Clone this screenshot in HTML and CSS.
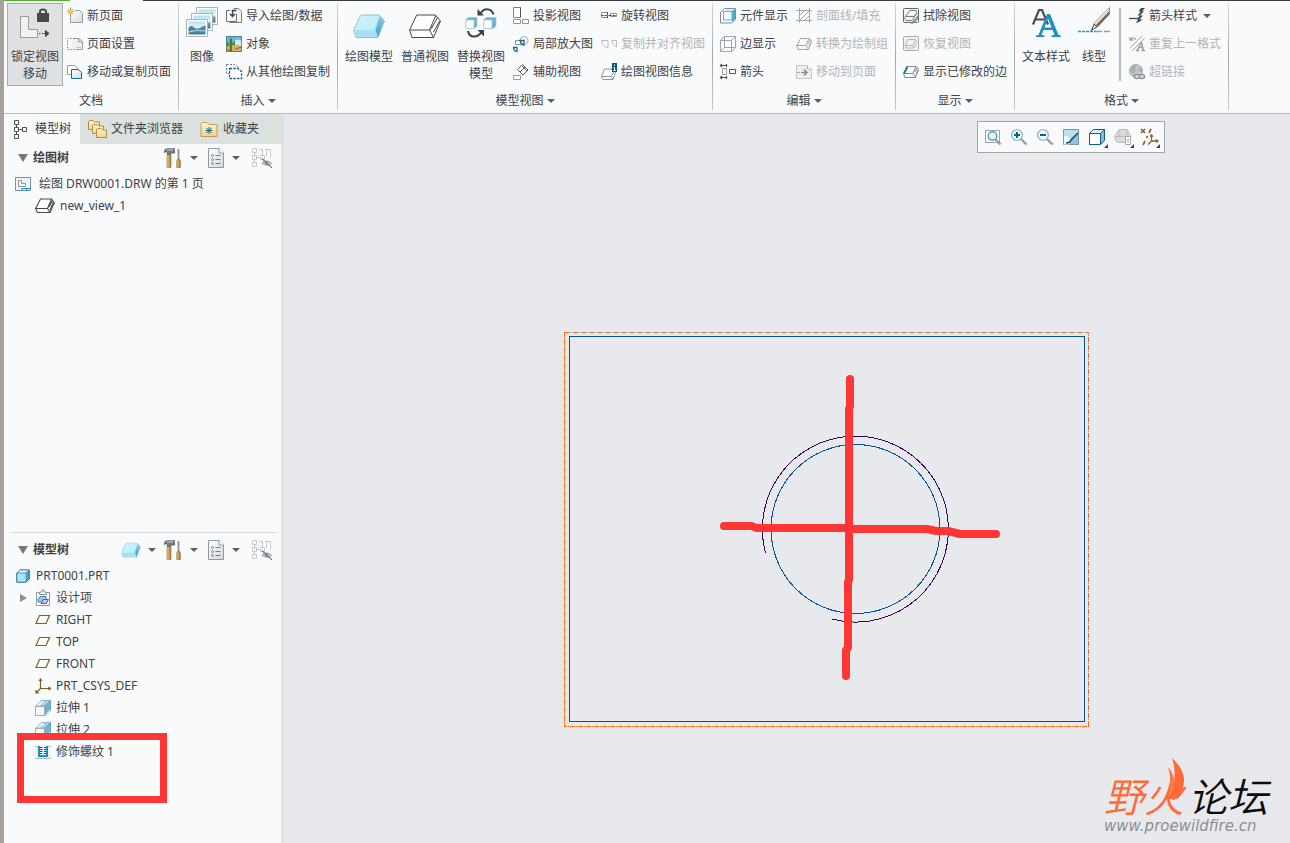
FILE: index.html
```html
<!DOCTYPE html>
<html lang="zh-CN">
<head>
<meta charset="utf-8">
<title>DRW0001.DRW</title>
<link rel="stylesheet" href="styles.css">
</head>
<body class="app">
<svg class="sprite" aria-hidden="true">
  <defs>
    <linearGradient id="ice" x1="0" y1="0" x2="1" y2="1"><stop offset="0" stop-color="#e8fbff"/><stop offset=".55" stop-color="#b4e8f8"/><stop offset="1" stop-color="#8fd6f0"/></linearGradient>
    <linearGradient id="iceside" x1="0" y1="0" x2="0" y2="1"><stop offset="0" stop-color="#8ccbe4"/><stop offset="1" stop-color="#3d9fc8"/></linearGradient>
    <linearGradient id="page" x1="0" y1="0" x2="1" y2="1"><stop offset="0" stop-color="#fff"/><stop offset="1" stop-color="#d4dade"/></linearGradient>
    <linearGradient id="wood" x1="0" y1="0" x2="1" y2="0"><stop offset="0" stop-color="#f0cf92"/><stop offset="1" stop-color="#a8722c"/></linearGradient>
    <linearGradient id="folder" x1="0" y1="0" x2="0" y2="1"><stop offset="0" stop-color="#fff3d0"/><stop offset="1" stop-color="#f4d287"/></linearGradient>
    <linearGradient id="photo" x1="0" y1="0" x2="0" y2="1"><stop offset="0" stop-color="#aee0f5"/><stop offset=".45" stop-color="#e6f4f8"/><stop offset=".6" stop-color="#6f9db2"/><stop offset="1" stop-color="#35789c"/></linearGradient>
  </defs>
  <symbol id="i-hammer" viewBox="0 0 18 20">
    <path d="M3 6.500h4V19.500h-4z" fill="url(#wood)" stroke="#a0743a" stroke-width=".6"/>
    <path d="M.5 4.500V2.500Q1 .8 3 .7H10.500V5H7.500L6.500 6.500H3.500V4Q2 3.200.5 4.500z" fill="#777b80" stroke="#4f5458" stroke-width=".7"/>
    <path d="M2.500 2H9" stroke="#cfd3d6"/><path d="M14.500 1V11" stroke="#85898d" stroke-width="1.600"/>
    <path d="M12.800 12.500l1-1.500h1.500l1 1.500v7h-3.500z" fill="url(#wood)" stroke="#98682c" stroke-width=".7"/>
  </symbol>
  <symbol id="i-list" viewBox="0 0 16 20">
    <path d="M.5.500H11L15.500 5V19.500H.5z" fill="url(#page)" stroke="#8e979d"/><path d="M11 .5V5H15.500" fill="#fff" stroke="#8e979d"/>
    <g fill="none" stroke="#6d757a" stroke-width=".9"><rect x="3.500" y="6.500" width="2" height="2" rx="1"/><rect x="3.500" y="10.500" width="2" height="2" rx="1"/><rect x="3.500" y="14.500" width="2" height="2" rx="1"/><path d="M7.500 7.500h5M7.500 11.500h5M7.500 15.500h5"/></g>
  </symbol>
  <symbol id="i-treehide" viewBox="0 0 20 20">
    <g fill="none" stroke="#c4c8ca"><path d="M.5.500h4v4h-4zM.5 7.500h4v4h-4zM.5 14.500h4v4h-4zM2.500 4.500v3M2.500 11.500v3M4.500 9.500h4M8.500 7.500h4v4h-4zM7 1.500h4M13 1.500h5.500M10.500 1.500v6M14.500 1.500v7M18.500 1.500v8"/></g>
    <path d="M10 15Q14.500 10.800 19.500 15.500Q15 19 10 15z" fill="#dfe2e3" stroke="#8c9193"/><circle cx="14.500" cy="15" r="2" fill="#8c9193"/><path d="M10 10.500L20 20" stroke="#777d80" stroke-width="1.200"/>
  </symbol>
  <symbol id="i-view" viewBox="0 0 20 16"><g fill="#fff" stroke="#43484b" stroke-width="1.100"><path d="M5.500 1H16.500L19.300 4.500L15 14.500H2.500L.6 10.500z"/><path fill="none" d="M.6 10.500H12.500L16.500 1M12.500 10.500L15 14.500M14 9L17.500 2.500M15 12L18.500 4"/></g></symbol>
  <symbol id="i-plane" viewBox="0 0 16 12"><path d="M4.500 1.500H14.500L11 9.500H1z" fill="#fffdf4" stroke="#7f6126" stroke-width="1.200"/></symbol>
  <symbol id="i-extrude" viewBox="0 0 16 16">
    <path d="M.8 6L6.500.5H15.500L10 6z" fill="#a9d3e5" stroke="#82b5cb"/><path d="M1.500 5.500L6.500 1H10L5 5.500z" fill="#e4f1f6"/><path d="M10 6L15.500.5V10L10 15.500z" fill="#71b2d1" stroke="#64a3c1"/><path d="M10.800 14L15 9.800V11L11 15z" fill="#fff" stroke="#9cc7da" stroke-width=".6"/><rect x=".5" y="6.500" width="9" height="9" fill="#f8f8f8" stroke="#a6abad"/>
  </symbol>
  <symbol id="i-slab" viewBox="0 0 32 32">
    <path d="M8 7H26L31.500 13L25 29.500H3L.5 22z" fill="url(#ice)" stroke="#9bbfcb"/><path d="M26.500 8L31 13L25 29L22.500 22z" fill="url(#iceside)"/><path d="M1 22L22 22.500L24.500 29H3z" fill="#a6e0f3"/><path d="M8.500 8H26L21 22H1.500z" fill="#c7f0fb" opacity=".8"/>
  </symbol>
  <symbol id="i-slabline" viewBox="0 0 16 16"><path d="M4.500 2.500H13L15.500 5L12.500 13.500H2L.6 10z" fill="none" stroke="currentColor"/><path d="M.6 9.500H10L13 2.500M10 9.500L12.500 13.500M11.700 8L14.500 3.500M13 10.500L15 6" fill="none" stroke="currentColor"/></symbol>
</svg>

<header class="topstrip"><span class="topstrip-file"></span><span class="topstrip-tab"></span></header>

<nav class="ribbon" aria-label="功能区">
  <section class="group">
    <div class="group-body">
      <button class="big big-active"><svg class="icon32" viewBox="0 0 32 32"><path d="M1.500 8.500h8v13h9v8h-17z" fill="#f1f2f3" stroke="#9a9c9d"/><path d="M21 6V3.500Q21 1.500 24 1.500T27 3.500V6" fill="none" stroke="#4a4a4a" stroke-width="2"/><rect x="18" y="5" width="12" height="9" fill="#484848"/><path d="M20 25.500h1.500M23 25.500h1.500M25 25.500h4M26.500 22.500L30 25.500L26.500 28.500z" stroke="#444" fill="#444"/></svg><span>锁定视图</span><span>移动</span></button>
      <div class="column">
        <button class="small"><svg class="icon16" viewBox="0 0 16 16"><path d="M3.500 4V14.500H15.500V5.500L12.500 2.500H8" fill="url(#page)" stroke="#979da1"/><path d="M3.500-.5V7M0 3.300H7M1 .8L6 5.800M6 .8L1 5.800" stroke="#e78a12"/><circle cx="3.500" cy="3.300" r="1.200" fill="#ffe05a"/></svg>新页面</button>
        <button class="small"><svg class="icon16" viewBox="0 0 16 16"><path d="M8 2.500H12L15.500 5.500V13.500H5V2.500z" fill="#edf0f2"/><path d="M7 2.500H12L15.500 5.500V13.500H9" fill="none" stroke="#979da1"/><path d="M7.500 2.500H.5V13.500H8" fill="none" stroke="#7b858b" stroke-dasharray="1.500 1.500"/><path d="M11.500 2.500V6H15.500" fill="#d3dadd" stroke="#979da1"/><path d="M9 11.500h5" stroke="#bcc7cc"/></svg>页面设置</button>
        <button class="small"><svg class="icon16" viewBox="0 0 16 16"><path d="M.5 1.500H8L10.500 4V10.500H.5z" fill="#fff" stroke="#979da1"/><path d="M4.500 5.500H11.500L14.500 8.500V14.500H4.500z" fill="url(#page)" stroke="#17698c"/></svg>移动或复制页面</button>
      </div>
    </div>
    <div class="group-label">文档</div>
  </section>

  <section class="group">
    <div class="group-body">
      <button class="big big-narrow"><svg class="icon32" viewBox="0 0 32 32"><g fill="#fff" stroke="#adb2b5"><path d="M10.500-.5h21v17h-21z"/><path d="M12.500 1.500h17v13h-17z" fill="url(#photo)" stroke="none"/><path d="M5.500 5.500h21v17h-21z"/><path d="M7.500 7.500h17v13h-17z" fill="url(#photo)" stroke="none"/><path d="M.5 11.500h21v17h-21z"/><path d="M2.500 13.500h17v13h-17z" fill="url(#photo)" stroke="none"/></g><path d="M2.500 20Q5 16.500 8 19.500T14 20T19.500 17.500V22H2.500z" fill="#52859b"/><path d="M3 24Q11 21 19 23" stroke="#a7d7e9" fill="none"/></svg><span>图像</span></button>
      <div class="column">
        <button class="small"><svg class="icon16" viewBox="0 0 16 16"><path d="M7.500.5H12.500L15.500 3.500V14.500H3.500" fill="#f0f2f3" stroke="#777f83"/><path d="M4 2.500H.5V13.500H10.500V6" fill="none" stroke="#6b7174"/><path d="M10.500 2.500H6.500V8M4 6L6.500 8.500L9 6" fill="none" stroke="#3d4346" stroke-width="1.400"/></svg>导入绘图/数据</button>
        <button class="small"><svg class="icon16" viewBox="0 0 16 16"><path d="M0 0H16V16H0z" fill="#68b4dc"/><path d="M8 5Q12 2 16 5V10H8z" fill="#d6edf6"/><path d="M0 10Q8 7 16 10V16H0z" fill="#d5ae69"/><path d="M3.800 3Q5 1.500 6 3V16H3.800zM1 6V10H4V8.500H2.200V6zM9 5V9H6V7.500H7.800V5z" fill="#4e7f20"/><path d="M9 13L16 11M0 14h4" stroke="#876735"/><path d="M.5.500h15v15H.500z" fill="none" stroke="#466f76" stroke-width=".7"/></svg>对象</button>
        <button class="small"><svg class="icon16" viewBox="0 0 16 16"><path d="M.5.500H8L12.500 3V7M.5.500V9.500H5" fill="none" stroke="#697b84" stroke-dasharray="2 1.500"/><path d="M3.500 4.500H12L15.500 7.500V14.500H3.500z" fill="#fff" stroke="#166687" stroke-width="1.300" stroke-dasharray="2.500 1.200"/></svg>从其他绘图复制</button>
      </div>
    </div>
    <button class="group-label">插入<i class="caret"></i></button>
  </section>

  <section class="group">
    <div class="group-body">
      <button class="big"><svg class="icon32"><use href="#i-slab"/></svg><span>绘图模型</span></button>
      <button class="big"><svg class="icon32" viewBox="0 0 32 32"><g fill="#fff" stroke="#45494b"><path d="M7.700 7H26L31.500 13L24.500 29.500H3L.6 22z"/><path fill="none" d="M.6 22H20.500L27 7M20.500 22L24.500 29.500M22.500 20L29 9M24.500 24L30.500 13M20.500 22L24 18.500"/></g></svg><span>普通视图</span></button>
      <button class="big"><svg class="icon32" viewBox="0 0 32 32"><g stroke="#b5bec2" stroke-width=".7"><path d="M1 11.500L3.500 9.500H12V18L9.500 20.500H1z" fill="#62b5da"/><path d="M1 12H9V20.500H1z" fill="#fff"/><path d="M19 11.500L21.500 9.500H31V18L28 20.500H19z" fill="#62b5da"/><path d="M19 12H27V20.500H19z" fill="#fff"/></g><g fill="none" stroke="#3e4346" stroke-width="2"><path d="M28.500 6.500Q27 1.200 22 1.200Q18 1.200 16 5"/><path d="M3 23Q4 29 10 28.500Q14 28 16.500 24"/></g><path d="M12.500 1V7.500H19z M19 28.500V22H12.500z" fill="#3e4346"/></svg><span>替换视图</span><span>模型</span></button>
      <div class="column">
        <button class="small"><svg class="icon16" viewBox="0 0 16 16"><g fill="#fff" stroke="#8f9699"><path d="M.5-.5h7v10h-7z" stroke="#7d8386"/><path d="M.5 11.500h7v4h-7zM9.500 11.500h6v4h-6z"/></g><path d="M7.500-.5V9.500" stroke="#4d5254"/></svg>投影视图</button>
        <button class="small"><svg class="icon16" viewBox="0 0 16 16"><circle cx="11" cy="4.500" r="4" fill="#f9fafb" stroke="#a4b0b5"/><path d="M2.500 4.500h6v4h-6z" fill="#fff" stroke="#879398"/><path d="M7 4.500H11V9Q8 9 7 4.500z" fill="#d1edf5" stroke="#17698c" stroke-width="1.300"/><path d="M.5 11.500H4V15.500Q1 15.500.5 11.500z" fill="#fff" stroke="#17698c" stroke-width="1.300"/></svg>局部放大图</button>
        <button class="small"><svg class="icon16" viewBox="0 0 16 16"><path d="M4.500 5.500L9.500.5L15 6L10 11z" fill="#fff" stroke="#555b5e"/><path d="M7 8L12 3M9 2L14 7" stroke="#555b5e"/><path d="M.5 11.500h7v4h-7z" fill="#fff" stroke="#989ea1"/></svg>辅助视图</button>
      </div>
      <div class="column">
        <button class="small"><svg class="icon16" viewBox="0 0 16 16"><path d="M.5 4.500h6v5h-6zM9.500 5.500h6v3h-6z" fill="#fff" stroke="#8c8e8c"/><path d="M6.500 4V10" stroke="#4b4d4b"/><path d="M0 7.500H16" stroke="#4b4d4b"/><path d="M2 7.500H16" stroke="#d99436" stroke-dasharray="2 2"/></svg>旋转视图</button>
        <button class="small" disabled><svg class="icon16" viewBox="0 0 16 16"><path d="M.5 4.500H7V11.500Q2 11.500.5 4.500zM10.500 4.500H15.500V10.500Q11 9.500 10.500 4.500z" fill="#fff" stroke="#b4b8ba"/></svg>复制并对齐视图</button>
        <button class="small"><svg class="icon16" viewBox="0 0 16 16"><path d="M3.500 5H10L14.500 8L12 15.500H2L.5 12.500z" fill="#fff" stroke="#90969a"/><path d="M.5 12.500H10L13 8M10 12.500L12 15.500" fill="none" stroke="#90969a"/><path d="M11-1H16V8H11z" fill="#07587f"/><path d="M13.500.5V2M12.500 3.500H13.500V6M12.300 6.500H15" stroke="#fff" fill="none"/></svg>绘图视图信息</button>
      </div>
    </div>
    <button class="group-label">模型视图<i class="caret"></i></button>
  </section>

  <section class="group">
    <div class="group-body">
      <div class="column">
        <button class="small"><svg class="icon16" viewBox="0 0 16 16"><path d="M.5 4.500L4.500.5H15.500V11.500L11.500 15H.5z" fill="#fff" stroke="#81898d"/><path d="M3.500 3.500L5 1H15L12 3.500z" fill="#d3eef8"/><path d="M12 3L15 1V11L12 14z" fill="#56a9cf"/><path d="M3.500 3.500H12V12H3.500z" fill="#effafd" stroke="#5fb3d5"/></svg>元件显示</button>
        <button class="small"><svg class="icon16" viewBox="0 0 16 16"><path d="M.5 4.500L4.500.5H15.500V11.500L11.500 15.500H.5zM4.500.5V11.500M.5 15L4.500 11.500H15.500M.5 4.500H11.500V15.500M11.500 4.500L15.500.5" fill="#fff" fill-opacity=".5" stroke="#969da0" stroke-width=".9"/></svg>边显示</button>
        <button class="small"><svg class="icon16" viewBox="0 0 16 16"><path d="M.5 1.500H6M.5 13.500H6M2 0L.5 1.500L2 3M2 12L.5 13.500L2 15M6.500 0V3M6.500 12V15" fill="none" stroke="#4b5053" stroke-width="1.200"/><path d="M2.500 4.500h4v6h-4z" fill="#fff" stroke="#989da0"/><path d="M9.500 5.500h6v4h-6z" fill="#fff" stroke="#53585a"/></svg>箭头</button>
      </div>
      <div class="column">
        <button class="small" disabled><svg class="icon16" viewBox="0 0 16 16"><path d="M3.500 0V15M13.500 0V15M0 2.500H16M0 12.500H16" stroke="#a5a9ab"/><path d="M4 7L8 3M4 12L13 3M9 12L13 8" stroke="#a5a9ab"/></svg>剖面线/填充</button>
        <button class="small" disabled><svg class="icon16 gray"><use href="#i-slabline"/></svg>转换为绘制组</button>
        <button class="small" disabled><svg class="icon16" viewBox="0 0 16 16"><path d="M.5 1.500H11.500L15.500 5V14.500H.5z" fill="#eceeef" stroke="#c4c8ca"/><path d="M11.500 1.500V5H15.500" stroke="#b3b7b9" fill="#fff"/><path d="M1 8.500H6" stroke="#898e90" stroke-dasharray="1 1"/><path d="M6 8.500H11M8 5.500L11 8.500L8 11.500" fill="none" stroke="#898e90" stroke-width="1.600"/></svg>移动到页面</button>
      </div>
    </div>
    <button class="group-label">编辑<i class="caret"></i></button>
  </section>

  <section class="group">
    <div class="group-body">
      <div class="column">
        <button class="small"><svg class="icon16" viewBox="0 0 16 16"><rect x=".5" y=".5" width="15" height="14" rx="1" fill="#f3f4f4" stroke="#616669"/><path d="M4.500 5.500L7 2.500H13L14 4.500L11 8.500H2.500L1.500 10.500L3 12.500H9L14 5M3 8L5 5.500" fill="none" stroke="#777d80"/><path d="M6 14.500Q11 14 14.500 7.500L16 8.500Q13 14.500 9 16z" fill="#84898c"/></svg>拭除视图</button>
        <button class="small" disabled><svg class="icon16" viewBox="0 0 16 16"><rect x=".5" y=".5" width="15" height="14" rx="1" fill="#f1f2f3" stroke="#a6abad"/><path d="M5 3.500H12.500L14 5.500L11 12H3L2 9.500zM2 9.500H9.500L12.500 3.500M9.500 9.500L11 12" fill="none" stroke="#b3b7b9"/></svg>恢复视图</button>
        <button class="small"><svg class="icon16 mid" viewBox="0 0 16 16"><use href="#i-slabline"/><path d="M1 9.500L4.500 2.500" stroke="#0f739e" stroke-width="1.800"/></svg>显示已修改的边</button>
      </div>
    </div>
    <button class="group-label">显示<i class="caret"></i></button>
  </section>

  <section class="group">
    <div class="group-body">
      <button class="big"><svg class="icon32" viewBox="0 0 32 32"><path d="M3 16.500L9 2H12L18 16.500M5 11.500H15" fill="none" stroke="#4b4d4f" stroke-width="2.200"/><path d="M6 29V27.500L8.500 27L17 6H20L28.500 27L31 27.500V29H21.500V27.500L24.500 27L22.500 22H13.500L11.500 27L14.500 27.500V29zM14.500 19.500H21.500L18 10.500z" fill="#1d91c4"/></svg><span>文本样式</span></button>
      <button class="big big-narrow"><svg class="icon32" viewBox="0 0 32 32"><path d="M0 23.500H18" stroke="#1b9ad0" stroke-width="1.600" stroke-dasharray="3 1"/><path d="M18 23.500H32" stroke="#999da0" stroke-width="1.400" stroke-dasharray="6 2"/><path d="M14 21.500L16.500 15L31.500-.5V6L20 18.500z" fill="#d8dadb" stroke="#777b7e" stroke-width=".8"/><path d="M20 18.500L31.500 6V3L18 17z" fill="#8a5e45"/><path d="M17 16L31 1" stroke="#fff"/><path d="M13.500 22.500L16 16.500L19 18.500z" fill="#fff" stroke="#434649"/></svg><span>线型</span></button>
      <span class="divider"></span>
      <div class="column">
        <button class="small"><svg class="icon16" viewBox="0 0 16 16"><path d="M0 10.500H9" stroke="#44484b" stroke-width="1.300"/><path d="M12 0H16L13 3H15L11 7.500H14L10.500 11.500H14L7 15.500L9 11.500L8 11L11 7.500H8.500L12 3.500H9.500z" fill="#3f4346"/></svg>箭头样式<i class="caret"></i></button>
        <button class="small" disabled><svg class="icon16" viewBox="0 0 16 16"><path d="M1 12L13 0M3 15L15.500 2.500" stroke="#a0a5a7"/><path d="M1 1V4H4M1 4Q4 0 7 3.500" fill="none" stroke="#9ca1a3" stroke-width="1.300"/><path d="M8 14.500L12.500 6.500L14.500 14.500M10 11.500H14M7 14.500H10M12.500 14.500H16" fill="none" stroke="#979c9e" stroke-width="1.300"/></svg>重复上一格式</button>
        <button class="small" disabled><svg class="icon16" viewBox="0 0 16 16"><circle cx="7" cy="7" r="6.600" fill="#c5c9cb" stroke="#aeb3b5"/><path d="M2 3Q5 0 8 1L6 4L8 6L4 10L1 7zM10 3L13 5V8L9 7z" fill="#aab0b2"/><g fill="#e4e6e7" stroke="#8d9294" stroke-width="1.400"><rect x="5.500" y="10.500" width="5" height="4" rx="2"/><rect x="10.500" y="10.500" width="5" height="4" rx="2"/></g></svg>超链接</button>
      </div>
    </div>
    <button class="group-label">格式<i class="caret"></i></button>
  </section>
</nav>

<div class="workspace">
  <aside class="navigator">
    <div class="tabs" role="tablist">
      <button class="tab tab-active" role="tab" aria-selected="true"><svg class="tab-icon" viewBox="0 0 18 18"><g fill="#fff" stroke="#4c5153"><path d="M3.500 2.500v12M3.500 9.500h6" fill="none"/><path d="M1.500.5h4v4h-4zM1.500 7.500h4v4h-4zM1.500 14.500h4v4h-4zM9.500 7.500h4v4h-4z"/></g></svg>模型树</button>
      <button class="tab" role="tab"><svg class="tab-icon" viewBox="0 0 18 18"><g fill="url(#folder)" stroke="#b68b45"><path d="M.5 9.500V1.500L2 .5H5L6.500 2H11.500V9.500z"/><path d="M4.500 13.500V5.500L6 4.500H9L10.500 6H15.500V13.500z"/><path d="M8.500 17.500V9.500L10 8.500H13L14.500 10H18.500V17.500z"/></g></svg>文件夹浏览器</button>
      <button class="tab" role="tab"><svg class="tab-icon" viewBox="0 0 18 18"><path d="M1 16.500V3.500L2.500 2.500H7L9 4.500H17V16.500z" fill="url(#folder)" stroke="#c29b5b"/><path d="M9 7V14M5.500 10.500H12.500M6.500 8L11.500 13M11.500 8L6.500 13" stroke="#087099"/></svg>收藏夹</button>
    </div>

    <section class="pane pane-drawing">
      <header class="pane-head">
        <i class="twist"></i><h2>绘图树</h2>
        <div class="pane-tools">
          <button class="tool" aria-label="设置"><svg class="hammer"><use href="#i-hammer"/></svg><i class="caret"></i></button>
          <button class="tool" aria-label="显示"><svg class="list"><use href="#i-list"/></svg><i class="caret"></i></button>
          <button class="tool" aria-label="隐藏" disabled><svg class="treehide"><use href="#i-treehide"/></svg></button>
        </div>
      </header>
      <ul class="tree">
        <li class="node"><svg class="icon16" viewBox="0 0 16 16"><path d="M.5 1.500H15.500V14.500H.5z" fill="#edf7fa" stroke="#79939f"/><path d="M3.500 4.500H6.500V7.500H10.500V10.500H3.500z" fill="#fff" stroke="#8d989d"/><path d="M7 15V12.500H16M11.500 12.500V15" stroke="#2492c2" fill="none"/></svg><span>绘图 DRW0001.DRW 的第 1 页</span></li>
        <li class="node level-1"><svg class="viewicon"><use href="#i-view"/></svg><span>new_view_1</span></li>
      </ul>
    </section>

    <section class="pane pane-model">
      <header class="pane-head">
        <i class="twist"></i><h2>模型树</h2>
        <div class="pane-tools">
          <button class="tool tool-model" aria-label="模型"><svg class="slab" viewBox="0 5 32 26"><use href="#i-slab" width="32" height="32"/></svg><i class="caret"></i></button>
          <button class="tool" aria-label="设置"><svg class="hammer"><use href="#i-hammer"/></svg><i class="caret"></i></button>
          <button class="tool" aria-label="显示"><svg class="list"><use href="#i-list"/></svg><i class="caret"></i></button>
          <button class="tool" aria-label="隐藏" disabled><svg class="treehide"><use href="#i-treehide"/></svg></button>
        </div>
      </header>
      <ul class="tree">
        <li class="node part"><svg class="icon14" viewBox="0 0 14 14"><path d="M.8 4L4 1H13.200V10L10 13.200H.8z" fill="#46a9d3" stroke="#16668b"/><path d="M.8 4L4 1H13L10 4z" fill="#d7f4fc" stroke="#2d7798" stroke-width=".6"/><path d="M1.300 4.500H9.500V12.700H1.300z" fill="#aee6f8"/></svg><span>PRT0001.PRT</span></li>
        <li class="node level-1"><i class="twist twist-closed"></i><svg class="icon16" viewBox="0 0 16 16"><path d="M1.500 2.500H14.500V15.500H1.500z" fill="#fff" stroke="#929a9e"/><path d="M4.500 4.500V2.500L7 1.500V0H9V1.500L11.500 2.500V4.500z" fill="#f2f4f5" stroke="#8a9296"/><path d="M3 9L5 6.500H11V9L9 12H3z" fill="#8fd0e6" stroke="#3e8fac"/><path d="M6 13.500L8 9.500H13.500L11.500 13.500z" fill="#cdbce8" stroke="#7855ab"/></svg><span>设计项</span></li>
        <li class="node level-1"><svg class="planeicon"><use href="#i-plane"/></svg><span>RIGHT</span></li>
        <li class="node level-1"><svg class="planeicon"><use href="#i-plane"/></svg><span>TOP</span></li>
        <li class="node level-1"><svg class="planeicon"><use href="#i-plane"/></svg><span>FRONT</span></li>
        <li class="node level-1"><svg class="icon16" viewBox="0 0 16 16"><path d="M5.500 1V10.500H15M5.500 10.500L1 15M4 3L5.500 1L7 3M13.500 9L15.500 10.500L13.500 12M1 12V15H4" fill="none" stroke="#7f5d22" stroke-width="1.200"/></svg><span>PRT_CSYS_DEF</span></li>
        <li class="node level-1"><svg class="icon16"><use href="#i-extrude"/></svg><span>拉伸 1</span></li>
        <li class="node level-1"><svg class="icon16"><use href="#i-extrude"/></svg><span>拉伸 2</span></li>
        <li class="node level-1"><svg class="icon16" viewBox="0 0 16 16"><path d="M0 2H16V15H0z" fill="#f0f1f2"/><path d="M0 2.500H4M12 2.500H16M0 14.500H16" stroke="#b3b6b8"/><path d="M3 2H13V13H3z" fill="#1690c2"/><path d="M5 2H11V11H5z" fill="#f4fbfd"/><path d="M5 3.500H7.500M5 5.500H7.500M5 7.500H7.500M5 9.500H7.500M9 3.500H11M9 5.500H11M9 7.500H11M9 9.500H11" stroke="#075478"/></svg><span>修饰螺纹 1</span></li>
      </ul>
      <div class="highlight"></div>
    </section>
  </aside>

  <main class="canvas">
    <div class="viewbar" role="toolbar">
      <button aria-label="重新调整"><svg class="icon18" viewBox="0 0 18 18"><path d="M1.500 2.500h14v12h-14z" fill="#fff" stroke="#9ca1a4"/><circle cx="8.500" cy="8" r="4.300" fill="#e6f5fb" stroke="#5b9dba" stroke-width="1.400"/><path d="M11.500 11.500L16.500 16.500" stroke="#a39a93" stroke-width="2.400"/></svg></button>
      <button aria-label="放大"><svg class="icon18" viewBox="0 0 18 18"><circle cx="7" cy="7" r="5.400" fill="#f2fafd" stroke="#93bccd" stroke-width="1.400"/><path d="M7 4V10M4 7H10" stroke="#086391" stroke-width="2"/><path d="M11 11L16.500 16.500" stroke="#a39a93" stroke-width="2.400"/></svg></button>
      <button aria-label="缩小"><svg class="icon18" viewBox="0 0 18 18"><circle cx="7" cy="7" r="5.400" fill="#f2fafd" stroke="#93bccd" stroke-width="1.400"/><path d="M4 7H10" stroke="#086391" stroke-width="2"/><path d="M11 11L16.500 16.500" stroke="#a39a93" stroke-width="2.400"/></svg></button>
      <button aria-label="重画"><svg class="icon18" viewBox="0 0 18 18"><path d="M1.500 1.500h15v15h-15z" fill="#8cc6dc" stroke="#83969d"/><path d="M2 2H16V5Q14 12 2 12z" fill="#b9e0ec"/><path d="M2 8Q8 8 9 12L7 16.500H2z" fill="#f8f9fa"/><path d="M4 15Q8 15 9 12L16 5" fill="none" stroke="#174f68" stroke-width="1.600"/></svg></button>
      <button aria-label="显示样式"><svg class="icon18" viewBox="0 0 18 18"><path d="M1.500 5.500L5.500 1.500H16.500V12.500L12.500 16.500H1.500z" fill="#85bed4" stroke="#135f82"/><path d="M1.500 5.500L5.500 1.500H16.500L12.500 5.500z" fill="#d9f2fa" stroke="#135f82"/><path d="M1.500 5.500H12.500V16.500H1.500z" fill="#fff" stroke="#135f82"/></svg><i class="corner"></i></button>
      <button aria-label="视图管理器"><svg class="icon18" viewBox="0 0 18 18"><path d="M1 8L5 1.500H13L16.500 7.500V11L12 14.500H4L1 12z" fill="#d9dbdd" stroke="#b9bdbf"/><path d="M1 8.500H15M5 2V8M13 2V8" stroke="#b9bdbf"/><path d="M11.500 8.500H16.500V16.500H11.500z" fill="#fff" stroke="#a3a7a9"/><path d="M13 11.500h2M13 13.500h2" stroke="#a3a7a9"/></svg><i class="corner"></i></button>
      <button aria-label="基准显示"><svg class="icon18" viewBox="0 0 18 18"><path d="M1 1L5 5M5 1L1 5M11 1L9 5M7.500 8L6.500 10M5 13L3 17" stroke="#86662e" stroke-width="1.700"/><path d="M11.500 7V13H18M11.500 13L8 16.500M10 8.500L11.500 7L13 8.500M16 11.500L18 13L16 14.500" fill="none" stroke="#86662e" stroke-width="1.300"/></svg><i class="corner"></i></button>
    </div>

    <svg class="drawing" viewBox="560 328 534 404" fill="none">
      <g shape-rendering="crispEdges">
        <rect x="564.500" y="332.500" width="524" height="394" stroke="#ff6a13" stroke-dasharray="5 1 1 1"/>
        <rect x="569.500" y="336.500" width="515" height="385" stroke="#0753a0"/>
        <path d="M831.500 619A93 93 0 1 0 765.500 553" stroke="#3c0060"/>
        <circle cx="855.500" cy="529" r="84.500" stroke="#0753a0"/>
      </g>
      <g stroke="#ff3636" stroke-width="8" stroke-linecap="round" stroke-linejoin="round">
        <path d="M850 379V406L849 409V580L848 582V648L846 650V676"/>
        <path d="M724 526H752L756 528H845L850 529H927L936 531H948L960 534H996"/>
      </g>
    </svg>

    <div class="brand">
      <div class="brand-name"><span class="brand-fire">野火</span><span>论坛</span></div>
      <div class="brand-url">www.proewildfire.cn</div>
      <svg class="flame" viewBox="0 0 20 44"><path d="M6 0Q19 12 18 24Q17 35 8 42L2 40Q13 22 6 0z" fill="#ff6a35"/><path d="M2 9Q10 18 8 29L3 39Q6 22 2 9z" fill="#ff7a48"/></svg>
    </div>
  </main>
</div>
</body>
</html>
```
FILE: styles.css
```css
* { box-sizing: border-box; }

.app {
  margin: 0;
  min-height: 100vh;
  display: flex;
  flex-direction: column;
  border-left: 4px solid #a5a2a1;
  background: #f8fafc;
  color: #3e4245;
  font: 12px/16px "Noto Sans", "Noto Sans CJK SC", sans-serif;
  overflow: hidden;
}

.app button {
  margin: 0;
  padding: 0;
  border: 0;
  background: none;
  color: inherit;
  font: inherit;
  white-space: nowrap;
}

.app button:disabled { color: #b3b5b6; }

.sprite { position: absolute; width: 0; height: 0; }
svg { display: block; flex: none; overflow: visible; }

.icon14 { width: 14px; height: 14px; }
.icon16 { width: 16px; height: 16px; }
.icon18 { width: 18px; height: 18px; }
.icon32 { width: 32px; height: 32px; }
.gray { color: #a0a5a7; }
.mid { color: #858b8e; }

.topstrip { display: flex; height: 1px; background: #363b3d; }
.topstrip-file { width: 66px; background: #50b030; }
.topstrip-tab { width: 73px; background: #f8fafc; }

/* Ribbon */
.ribbon {
  display: flex;
  border-bottom: 1px solid #b2bbbf;
}

.group {
  position: relative;
  display: flex;
  flex-direction: column;
  padding: 0 8px 0 7px;
}

.group::after {
  content: "";
  position: absolute;
  inset: 2px 0 3px auto;
  width: 1px;
  background: linear-gradient(#d3d7d9, #a2a7aa 50%, #c5cacc);
}

.group-body { display: flex; gap: 8px; height: 85px; }

.app .group-label {
  display: flex;
  align-items: center;
  justify-content: center;
  gap: 3px;
  height: 27px;
  padding-top: 2px;
}

.caret {
  border: 4px solid transparent;
  border-top-color: #5a5f62;
  border-bottom: 0;
}

.app .big {
  display: flex;
  flex-direction: column;
  align-items: center;
  width: 56px;
  height: 83px;
  margin: 2px -4px 0;
  padding: 4px 3px;
  border: 1px solid transparent;
  line-height: 17px;
}

.app .big-narrow { width: 40px; }
.big .icon32 { margin-bottom: 8px; }
.app .big-active { background: #dfe0e2; border-color: #a9acae; }

.column { display: flex; flex-direction: column; padding-top: 1px; }

.app .small {
  display: flex;
  align-items: center;
  gap: 4px;
  height: 28px;
}

.small .caret { margin-left: 2px; }

.divider {
  width: 3px;
  height: 73px;
  margin-top: 7px;
  border-right: 2px solid #b7babc;
}

/* Navigator */
.workspace { flex: 1; display: flex; }

.navigator {
  flex: none;
  display: flex;
  flex-direction: column;
  width: 280px;
  border-right: 3px solid #dce1e4;
}

.tabs {
  display: flex;
  height: 30px;
  margin-right: -3px;
  background: #dbe1df;
}

.app .tab {
  display: flex;
  align-items: center;
  gap: 5px;
  padding: 0 9px 0 8px;
}

.app .tab-active { gap: 4px; background: #f8fafc; }
.tab-icon { width: 18px; height: 18px; }
.tab-active .tab-icon { margin-left: 1px; }

.pane { position: relative; padding: 0 9px 0 8px; flex-basis: 0; }
.pane-drawing { flex-grow: 388; }
.pane-model { flex-grow: 311; }

.pane-model::before {
  content: "";
  display: block;
  height: 3px;
  margin-right: -4px;
  border-top: 1px solid #d5dcdf;
}

.pane-head {
  display: flex;
  align-items: center;
  height: 28px;
  padding-left: 6px;
}

.pane-head h2 { margin: 0 0 0 5px; font-size: 12px; font-weight: 700; }

.twist {
  border: 5px solid transparent;
  border-top: 8px solid #75797b;
  border-bottom: 0;
}

.twist-closed {
  margin: 0 3px 0 -15px;
  border: 4px solid transparent;
  border-left: 7px solid #8b8f91;
  border-right: 0;
}

.pane-tools { display: flex; align-items: center; gap: 10px; margin-left: auto; }
.app .tool { display: flex; align-items: center; gap: 8px; }
.app .tool-model { gap: 7px; margin-right: -2px; }
.hammer { width: 18px; height: 20px; }
.list { width: 16px; height: 20px; }
.treehide { width: 20px; height: 20px; }
.slab { width: 20px; height: 16px; }
.tool:last-child { margin-left: 2px; }

.tree { margin: 0; padding: 1px 0 0; list-style: none; }

.node {
  display: flex;
  align-items: center;
  gap: 8px;
  height: 22px;
  padding-left: 3px;
}

.node.part { padding-left: 4px; gap: 6px; }
.level-1 { padding-left: 23px; gap: 5px; }
.viewicon { width: 20px; height: 16px; }
.planeicon { width: 16px; height: 12px; }

.highlight {
  position: absolute;
  top: 201px;
  left: 13px;
  width: 150px;
  height: 70px;
  border: 7px solid #ff3636;
}

/* Drawing area */
.canvas {
  position: relative;
  flex: 1;
  background: #e8e9ed;
}

.viewbar {
  position: absolute;
  top: 7px;
  right: 125px;
  display: flex;
  gap: 8px;
  padding: 6px;
  border: 1px solid #a3a6a9;
  background: #f8fafc;
}

.app .viewbar button { position: relative; }

.corner {
  position: absolute;
  right: -2px;
  bottom: -2px;
  border: 2px solid #3d4144;
  border-top-color: transparent;
  border-left-color: transparent;
}

.drawing {
  position: absolute;
  top: 214px;
  left: 276px;
  width: 534px;
  height: 404px;
}

.brand {
  position: absolute;
  right: 22px;
  bottom: 8px;
}

.brand-name {
  display: flex;
  gap: 4px;
  color: #0b0b0b;
  font: italic 350 40px/44px "Noto Sans CJK SC", sans-serif;
}

.brand-fire { color: #ff6a35; }

.brand-url {
  color: #8c8e91;
  font: italic 15px/18px "DejaVu Sans", sans-serif;
}

.flame { position: absolute; top: -15px; left: 62px; width: 20px; height: 44px; }
```
